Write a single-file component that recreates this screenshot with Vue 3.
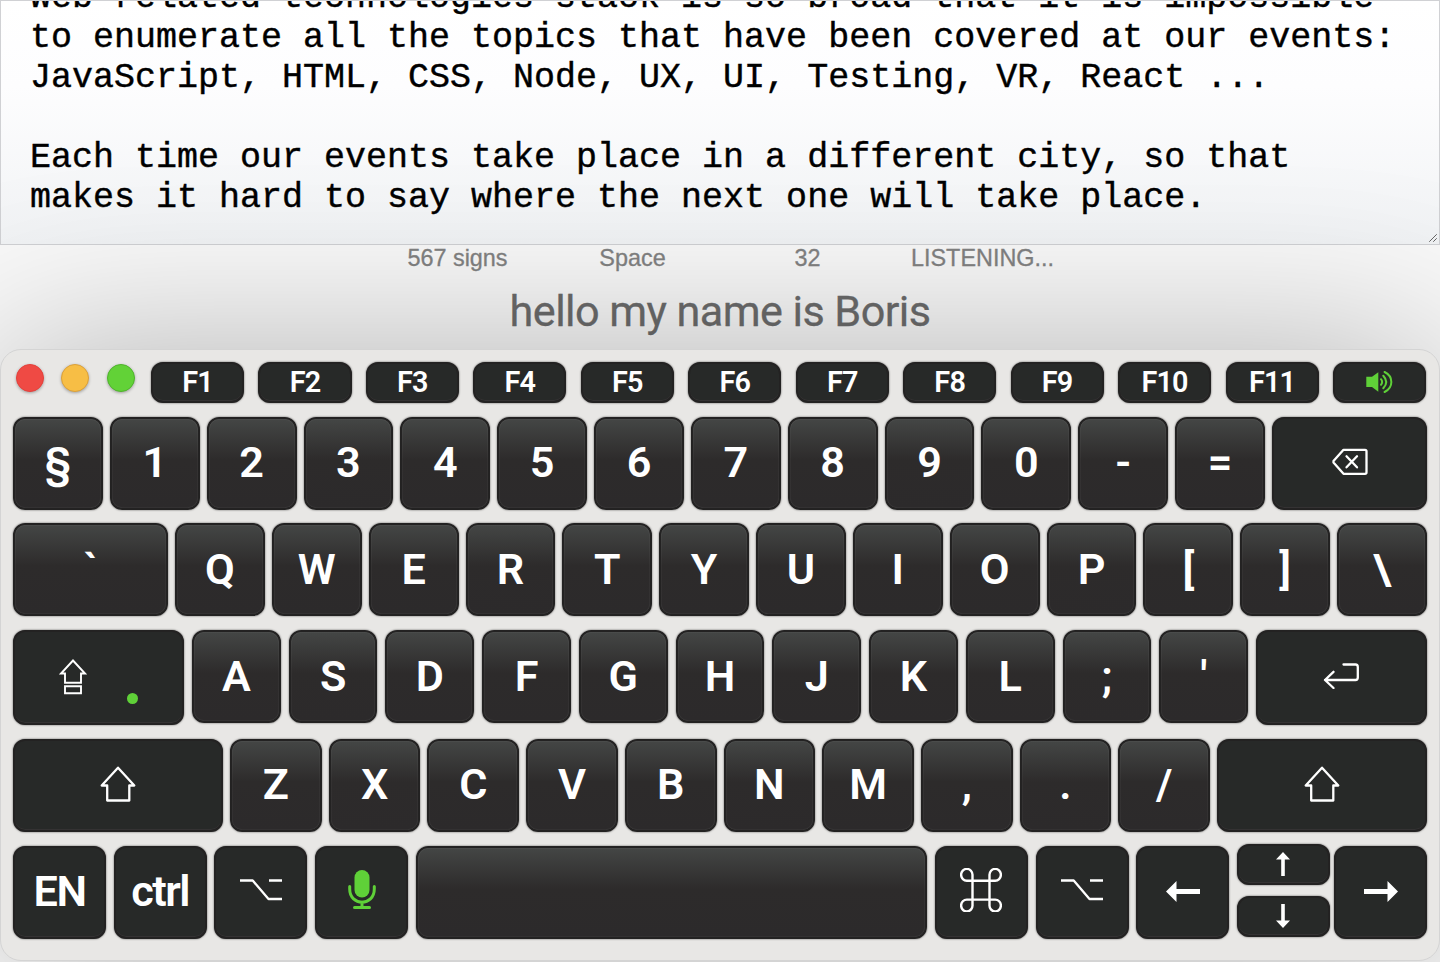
<script setup>
const fKeys = Array.from({ length: 11 }, (_, i) => `F${i + 1}`)
const digits = ['§', '1', '2', '3', '4', '5', '6', '7', '8', '9', '0', '-', '=']
const upper = ['Q', 'W', 'E', 'R', 'T', 'Y', 'U', 'I', 'O', 'P', '[', ']', '\\']
const home = ['A', 'S', 'D', 'F', 'G', 'H', 'J', 'K', 'L', ';', "'"]
const lower = ['Z', 'X', 'C', 'V', 'B', 'N', 'M', ',', '.', '/']
const text = `Web related technologies stack is so broad that it is impossible
to enumerate all the topics that have been covered at our events:
JavaScript, HTML, CSS, Node, UX, UI, Testing, VR, React ...

Each time our events take place in a different city, so that
makes it hard to say where the next one will take place.`
</script>

<template>
  <main class="page">
    <section class="editor">
      <div class="text">{{ text }}</div>
      <svg class="grip" width="8" height="8" viewBox="0 0 8 8"><path d="M.5 7.5l7-7M4.500 7.500l3-3" /></svg>
    </section>
    <div class="status">
      <span>567 signs</span><span>Space</span><span>32</span><span>LISTENING...</span>
    </div>
    <div class="speech">hello my name is Boris</div>

    <section class="keyboard">
      <div class="row functions">
        <div class="lights"><i class="red"></i><i class="yellow"></i><i class="green"></i></div>
        <div v-for="k in fKeys" :key="k" class="key dark small"><span>{{ k }}</span></div>
        <div class="key dark small">
          <svg class="speaker" width="27" height="22" viewBox="0 0 27 22">
            <path class="fill" d="M.3 5.700H6L12.300 1.200V20.800L6 15.900H.3Z" />
            <path class="wave" d="M15 8.200Q17.300 11 15 13.800M17.300 4.700Q23.200 11 17.300 17.300M18.600 1C27.600 5.500 27.600 16.500 18.600 21" />
          </svg>
        </div>
      </div>

      <div class="row">
        <div v-for="k in digits" :key="k" class="key"><span>{{ k }}</span></div>
        <div class="key dark w155">
          <svg class="lift" width="36" height="28" viewBox="0 0 36 28">
            <path d="M11.500 1.800H33Q34.500 1.800 34.500 3.300V24.300Q34.500 25.800 33 25.800H11.500L1.500 14.500V13.100ZM14.500 8.300L25 19.300M25 8.300L14.500 19.300" />
          </svg>
        </div>
      </div>

      <div class="row letters">
        <div class="key w155"><span>`</span></div>
        <div v-for="k in upper" :key="k" class="key"><span>{{ k }}</span></div>
      </div>

      <div class="row home letters">
        <div class="key dark w171 caps">
          <svg width="28" height="36" viewBox="0 0 28 36">
            <path class="thin" d="M14 1.500L26 14.500H22V23.700H6V14.500H2ZM6 27.200H22V34.200H6Z" />
          </svg>
          <i class="led"></i>
        </div>
        <div v-for="k in home" :key="k" class="key short"><span>{{ k }}</span></div>
        <div class="key dark w171">
          <svg class="enter" width="36" height="26" viewBox="0 0 36 26">
            <path d="M20.500 1.500H32.500Q34.800 1.500 34.800 4V14.500Q34.800 17 32.500 17H2M10.500 8.800L2 17L10.500 25" />
          </svg>
        </div>
      </div>

      <div class="row letters">
        <div class="key dark w210"><svg class="shift" width="36" height="36" viewBox="0 0 36 36"><path d="M18 1.700L34.300 19.500H29.300V34.500H7.200V19.500H1.700Z" /></svg></div>
        <div v-for="k in lower" :key="k" class="key"><span>{{ k }}</span></div>
        <div class="key dark w210"><svg class="shift" width="36" height="36" viewBox="0 0 36 36"><path d="M18 1.700L34.300 19.500H29.300V34.500H7.200V19.500H1.700Z" /></svg></div>
      </div>

      <div class="row bottom letters">
        <div class="key dark w93"><span>EN</span></div>
        <div class="key dark w93"><span>ctrl</span></div>
        <div class="key dark w93"><svg class="option" width="42" height="22" viewBox="0 0 42 22"><path d="M0 1.500H12.700L28.500 20H42M29 1.500H42" /></svg></div>
        <div class="key dark w93">
          <svg class="mic" width="28" height="40" viewBox="0 0 28 40">
            <rect class="fill" x="6.500" y="0" width="15" height="27.500" rx="7.500" />
            <path d="M1.700 16.500V19C1.700 36.500 26.300 36.500 26.300 19V16.500M14 32V37.500M6.500 37.500H21.500" />
          </svg>
        </div>
        <div class="key space"></div>
        <div class="key dark w93">
          <svg class="command" width="42" height="44" viewBox="0 0 42 44">
            <path d="M12.500 12.700H7A5.700 5.900 0 1 1 12.500 7V37A5.700 5.900 0 1 1 7 31.600H35A5.700 5.900 0 1 1 29.500 37V7A5.700 5.900 0 1 1 35 12.700Z" />
          </svg>
        </div>
        <div class="key dark w93"><svg class="option" width="42" height="22" viewBox="0 0 42 22"><path d="M0 1.500H12.700L28.500 20H42M29 1.500H42" /></svg></div>
        <div class="key dark w93"><svg class="side" width="34" height="21" viewBox="0 0 34 21"><path class="solid" d="M0 10.500L10.500 0V8H34V13H10.500V21Z" /></svg></div>
        <div class="stack">
          <div class="key dark"><svg width="14" height="24" viewBox="0 0 14 24"><path class="solid" d="M7 0L14 7.500H8.800V24H5.200V7.500H0Z" /></svg></div>
          <div class="key dark"><svg width="14" height="24" viewBox="0 0 14 24"><path class="solid" d="M7 24L14 16.500H8.800V0H5.200V16.500H0Z" /></svg></div>
        </div>
        <div class="key dark w93 last"><svg class="side" width="34" height="21" viewBox="0 0 34 21"><path class="solid" d="M34 10.500L23.500 0V8H0V13H23.500V21Z" /></svg></div>
      </div>
    </section>
  </main>
</template>

<style>
html, body { margin: 0; overflow: hidden; background: #f9f9f9; }
</style>

<style scoped>
* { box-sizing: border-box; }
.page { width: 1440px; height: 962px; overflow: hidden; font-family: Roboto, sans-serif; }
.editor {
  position: relative;
  height: 245px;
  border: 1px solid #d0d1d4;
  overflow: hidden;
  display: flex;
  align-items: flex-end;
  padding: 0 29px 26px;
  background: linear-gradient(#fff 0%, #fdfdfe 35%, #f1f3f5 100%);
}
.text {
  white-space: pre;
  font: 35px/40px "Liberation Mono", monospace;
  color: #000;
  -webkit-text-stroke: .4px #000;
}
.grip { position: absolute; right: 2px; bottom: 2px; }
.grip path { stroke: #666; stroke-width: 1; }
.status {
  width: 700px;
  height: 27px;
  margin: 0 auto;
  display: grid;
  grid-template-columns: repeat(4, 1fr);
  text-align: center;
  font: 23.400px/27px "Liberation Sans", sans-serif;
  color: #828282;
  -webkit-text-stroke: .3px #828282;
}
.speech {
  height: 77px;
  line-height: 80px;
  text-align: center;
  font-size: 43.200px;
  letter-spacing: -.57px;
  color: #6c6c6c;
  -webkit-text-stroke: .3px #6c6c6c;
}
.keyboard {
  height: 612px;
  border: 1px solid #d4d4d4;
  border-radius: 21px;
  padding: 12px;
  background: #e8e7e5;
  box-shadow: 0 4px 180px rgba(0, 0, 0, .29);
  display: flex;
  flex-direction: column;
  gap: 14px;
  position: relative;
}
.row { display: flex; gap: 7px; height: 93px; margin-bottom: -.3px; flex: none; }
.functions { height: 41px; gap: 14.400px; padding-right: 1px; }
.home { height: 95px; gap: 8px; }
.bottom { gap: 7.600px; }
.lights { display: flex; gap: 17.500px; width: 123.600px; padding: 2px 0 0 3px; flex: none; }
.lights i { width: 28px; height: 28px; border-radius: 50%; flex: none; box-shadow: 0 1px 3px rgba(0, 0, 0, .3); }
.red { background: #ef4a44; border: 1px solid #e6403b; }
.lights .yellow { background: #f7be45; border: 1px solid #dca13a; margin: 0 .500px 0 -.500px; }
.green { background: #62d237; border: 1px solid #4fb52c; }
.key {
  flex: 1 1 0;
  min-width: 0;
  display: flex;
  align-items: center;
  justify-content: center;
  border: 2px solid #232222;
  border-radius: 12px;
  color: #fff;
  font-size: 43.200px;
  font-weight: 600;
  line-height: 50px;
  background: linear-gradient(#444645 0%, #2d2b2b 46%, #2c2a2b 100%);
  box-shadow: inset 0 0 1px rgba(255, 255, 255, .35), 0 0 2px rgba(0, 0, 0, .65);
}
.key span { margin-top: -1px; }
.letters .key span { margin-top: 0; }
.dark { background: #272928; box-shadow: inset 0 -1px 0 #343233, 0 0 2px rgba(0, 0, 0, .65); }
.small { font-size: 28.800px; letter-spacing: -.8px; line-height: 34px; }
.small span { margin-top: -1px; }
.short { height: 93px; }
.w155 { flex: 0 0 155px; }
.w171 { flex: 0 0 171px; }
.w210 { flex: 0 0 210px; }
.w93 { flex: 0 0 93px; letter-spacing: -1.500px; }
.space { margin: 0 .600px; }
.stack { flex: 0 0 93px; height: 93px; margin-top: -2px; display: flex; flex-direction: column; gap: 11px; }
.stack .key { flex: 0 0 41px; }
.last { margin-left: -3.600px; }
svg { flex: none; display: block; fill: none; }
svg path { stroke: #fff; stroke-width: 2.300; stroke-linecap: round; stroke-linejoin: round; }
svg .thin { stroke-width: 1.900; stroke-linejoin: miter; }
svg .solid { stroke: none; fill: #fff; }
.lift { margin: -2px 0 0 1px; }
.enter { margin: -3px 2px 0 0; }
.shift { margin-top: -3px; }
.option { margin-top: -4px; }
.option path { stroke-linecap: butt; }
.side { margin-top: -1px; }
.mic { margin: -5px 0 0 1px; }
.mic .fill, .speaker .fill { fill: #5fd038; stroke: none; }
.mic path { stroke: #5fd038; stroke-width: 3; }
.speaker { margin-top: -2px; }
.speaker .wave { stroke: #5fd038; stroke-width: 2; }
.command { margin: 3px 1px 7px 0; }
.command path { stroke-width: 2.400; }
.stack svg { margin-right: 1px; }
.caps { justify-content: flex-start; padding-left: 44px; gap: 40px; }
.caps svg { margin-top: -2px; }
.led { width: 11px; height: 11px; border-radius: 50%; background: #5fd038; margin-top: 42px; }
</style>
